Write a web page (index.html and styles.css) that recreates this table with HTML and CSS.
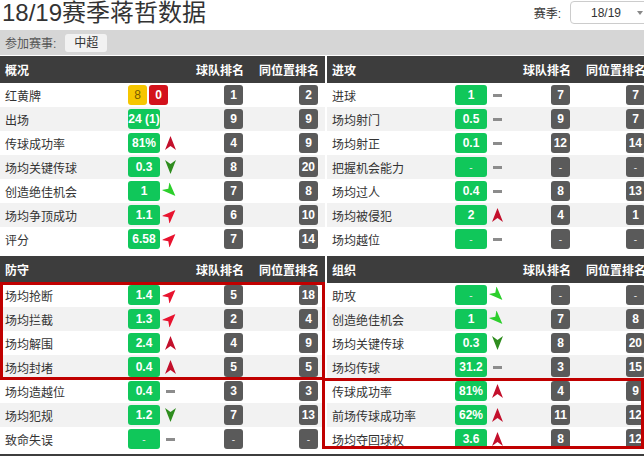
FILE: index.html
```html
<!DOCTYPE html>
<html lang="zh">
<head>
<meta charset="utf-8">
<title>18/19赛季蒋哲数据</title>
<link rel="stylesheet" href="styles.css">
</head>
<body>
<div class="page">
  <div class="top">
    <h1 class="title">18/19赛季蒋哲数据</h1>
    <div class="season">
      <span class="season-label">赛季:</span>
      <div class="select"><span>18/19</span><i class="caret"></i></div>
    </div>
  </div>
  <div class="filter">
    <span class="filter-label">参加赛事:</span>
    <span class="chip">中超</span>
  </div>

  <div class="sections">
    <div class="tbl">
      <div class="hd"><span class="hd-title">概况</span><span class="hd-col">球队排名</span><span class="hd-col">同位置排名</span></div>
      <div class="row"><span class="lbl">红黄牌</span><span class="cards"><b class="card yellow">8</b><b class="card red">0</b></span><span class="c-team"><b class="rk">1</b></span><span class="c-pos"><b class="rk">2</b></span></div>
      <div class="row"><span class="lbl">出场</span><span class="c-val"><b class="val">24 (1)</b></span><span class="c-ind"></span><span class="c-team"><b class="rk">9</b></span><span class="c-pos"><b class="rk">9</b></span></div>
      <div class="row"><span class="lbl">传球成功率</span><span class="c-val"><b class="val">81%</b></span><span class="c-ind"><i class="arr up"></i></span><span class="c-team"><b class="rk">4</b></span><span class="c-pos"><b class="rk">9</b></span></div>
      <div class="row"><span class="lbl">场均关键传球</span><span class="c-val"><b class="val">0.3</b></span><span class="c-ind"><i class="arr down"></i></span><span class="c-team"><b class="rk">8</b></span><span class="c-pos"><b class="rk">20</b></span></div>
      <div class="row"><span class="lbl">创造绝佳机会</span><span class="c-val"><b class="val">1</b></span><span class="c-ind"><i class="arr se"></i></span><span class="c-team"><b class="rk">7</b></span><span class="c-pos"><b class="rk">8</b></span></div>
      <div class="row"><span class="lbl">场均争顶成功</span><span class="c-val"><b class="val">1.1</b></span><span class="c-ind"><i class="arr ne"></i></span><span class="c-team"><b class="rk">6</b></span><span class="c-pos"><b class="rk">10</b></span></div>
      <div class="row"><span class="lbl">评分</span><span class="c-val"><b class="val">6.58</b></span><span class="c-ind"><i class="arr ne"></i></span><span class="c-team"><b class="rk">7</b></span><span class="c-pos"><b class="rk">14</b></span></div>
    </div>

    <div class="tbl">
      <div class="hd"><span class="hd-title">进攻</span><span class="hd-col">球队排名</span><span class="hd-col">同位置排名</span></div>
      <div class="row"><span class="lbl">进球</span><span class="c-val"><b class="val">1</b></span><span class="c-ind"><i class="dash"></i></span><span class="c-team"><b class="rk">7</b></span><span class="c-pos"><b class="rk">7</b></span></div>
      <div class="row"><span class="lbl">场均射门</span><span class="c-val"><b class="val">0.5</b></span><span class="c-ind"><i class="dash"></i></span><span class="c-team"><b class="rk">9</b></span><span class="c-pos"><b class="rk">7</b></span></div>
      <div class="row"><span class="lbl">场均射正</span><span class="c-val"><b class="val">0.1</b></span><span class="c-ind"><i class="dash"></i></span><span class="c-team"><b class="rk">12</b></span><span class="c-pos"><b class="rk">14</b></span></div>
      <div class="row"><span class="lbl">把握机会能力</span><span class="c-val"><b class="val empty">-</b></span><span class="c-ind"><i class="dash"></i></span><span class="c-team"><b class="rk empty">-</b></span><span class="c-pos"><b class="rk empty">-</b></span></div>
      <div class="row"><span class="lbl">场均过人</span><span class="c-val"><b class="val">0.4</b></span><span class="c-ind"><i class="dash"></i></span><span class="c-team"><b class="rk">8</b></span><span class="c-pos"><b class="rk">13</b></span></div>
      <div class="row"><span class="lbl">场均被侵犯</span><span class="c-val"><b class="val">2</b></span><span class="c-ind"><i class="arr up"></i></span><span class="c-team"><b class="rk">4</b></span><span class="c-pos"><b class="rk">1</b></span></div>
      <div class="row"><span class="lbl">场均越位</span><span class="c-val"><b class="val empty">-</b></span><span class="c-ind"><i class="dash"></i></span><span class="c-team"><b class="rk empty">-</b></span><span class="c-pos"><b class="rk empty">-</b></span></div>
    </div>

    <div class="tbl">
      <div class="hd"><span class="hd-title">防守</span><span class="hd-col">球队排名</span><span class="hd-col">同位置排名</span></div>
      <div class="row"><span class="lbl">场均抢断</span><span class="c-val"><b class="val">1.4</b></span><span class="c-ind"><i class="arr ne"></i></span><span class="c-team"><b class="rk">5</b></span><span class="c-pos"><b class="rk">18</b></span></div>
      <div class="row"><span class="lbl">场均拦截</span><span class="c-val"><b class="val">1.3</b></span><span class="c-ind"><i class="arr ne"></i></span><span class="c-team"><b class="rk">2</b></span><span class="c-pos"><b class="rk">4</b></span></div>
      <div class="row"><span class="lbl">场均解围</span><span class="c-val"><b class="val">2.4</b></span><span class="c-ind"><i class="arr up"></i></span><span class="c-team"><b class="rk">4</b></span><span class="c-pos"><b class="rk">9</b></span></div>
      <div class="row"><span class="lbl">场均封堵</span><span class="c-val"><b class="val">0.4</b></span><span class="c-ind"><i class="arr up"></i></span><span class="c-team"><b class="rk">5</b></span><span class="c-pos"><b class="rk">5</b></span></div>
      <div class="row"><span class="lbl">场均造越位</span><span class="c-val"><b class="val">0.4</b></span><span class="c-ind"><i class="dash"></i></span><span class="c-team"><b class="rk">3</b></span><span class="c-pos"><b class="rk">3</b></span></div>
      <div class="row"><span class="lbl">场均犯规</span><span class="c-val"><b class="val">1.2</b></span><span class="c-ind"><i class="arr down"></i></span><span class="c-team"><b class="rk">7</b></span><span class="c-pos"><b class="rk">13</b></span></div>
      <div class="row"><span class="lbl">致命失误</span><span class="c-val"><b class="val empty">-</b></span><span class="c-ind"><i class="dash"></i></span><span class="c-team"><b class="rk empty">-</b></span><span class="c-pos"><b class="rk empty">-</b></span></div>
    </div>

    <div class="tbl">
      <div class="hd"><span class="hd-title">组织</span><span class="hd-col">球队排名</span><span class="hd-col">同位置排名</span></div>
      <div class="row"><span class="lbl">助攻</span><span class="c-val"><b class="val empty">-</b></span><span class="c-ind"><i class="arr se"></i></span><span class="c-team"><b class="rk empty">-</b></span><span class="c-pos"><b class="rk empty">-</b></span></div>
      <div class="row"><span class="lbl">创造绝佳机会</span><span class="c-val"><b class="val">1</b></span><span class="c-ind"><i class="arr se"></i></span><span class="c-team"><b class="rk">7</b></span><span class="c-pos"><b class="rk">8</b></span></div>
      <div class="row"><span class="lbl">场均关键传球</span><span class="c-val"><b class="val">0.3</b></span><span class="c-ind"><i class="arr down"></i></span><span class="c-team"><b class="rk">8</b></span><span class="c-pos"><b class="rk">20</b></span></div>
      <div class="row"><span class="lbl">场均传球</span><span class="c-val"><b class="val">31.2</b></span><span class="c-ind"><i class="dash"></i></span><span class="c-team"><b class="rk">3</b></span><span class="c-pos"><b class="rk">15</b></span></div>
      <div class="row"><span class="lbl">传球成功率</span><span class="c-val"><b class="val">81%</b></span><span class="c-ind"><i class="arr up"></i></span><span class="c-team"><b class="rk">4</b></span><span class="c-pos"><b class="rk">9</b></span></div>
      <div class="row"><span class="lbl">前场传球成功率</span><span class="c-val"><b class="val">62%</b></span><span class="c-ind"><i class="arr up"></i></span><span class="c-team"><b class="rk">11</b></span><span class="c-pos"><b class="rk">12</b></span></div>
      <div class="row"><span class="lbl">场均夺回球权</span><span class="c-val"><b class="val">3.6</b></span><span class="c-ind"><i class="arr up"></i></span><span class="c-team"><b class="rk">8</b></span><span class="c-pos"><b class="rk">12</b></span></div>
    </div>

    <div class="mark mark-a"></div>
    <div class="mark mark-b"></div>
  </div>
  <div class="next-bar"></div>
</div>
</body>
</html>
```

FILE: styles.css
```css
html, body {
  margin: 0;
  padding: 0;
  background: #fff;
  overflow: hidden;
}
body {
  font-family: "Liberation Sans", "Noto Sans CJK SC", sans-serif;
  font-size: 12px;
  color: #333;
}
.page {
  width: 652px;
}
.top {
  height: 30px;
  display: flex;
  justify-content: space-between;
  align-items: flex-start;
}
.title {
  margin: 0 0 0 2px;
  font-size: 24px;
  font-weight: normal;
  line-height: 26px;
  color: #333;
}
.season {
  display: flex;
  align-items: center;
  height: 24px;
  margin-top: 0;
}
.season-label {
  font-size: 12px;
  color: #333;
  margin-right: 9px;
}
.select {
  position: relative;
  box-sizing: border-box;
  width: 82px;
  height: 23px;
  margin-top: 1px;
  border: 1px solid #ccc;
  border-radius: 4px;
  display: flex;
  align-items: center;
  justify-content: center;
  padding-right: 10px;
  font-size: 12px;
  color: #333;
}
.caret {
  position: absolute;
  right: 8px;
  top: 9px;
  width: 0;
  height: 0;
  border-left: 3px solid transparent;
  border-right: 3px solid transparent;
  border-top: 4px solid #888;
}
.filter {
  height: 25px;
  background: #d6d6d6;
  display: flex;
  align-items: center;
  padding-left: 5px;
  margin-bottom: 1px;
}
.filter-label {
  color: #555;
  font-size: 12px;
}
.chip {
  margin-left: 9px;
  height: 18px;
  line-height: 18px;
  padding: 0 9px;
  background: #f2f2f2;
  border-radius: 3px;
  color: #333;
  font-size: 12px;
}
.sections {
  position: relative;
  display: grid;
  grid-template-columns: 325px 325px;
  column-gap: 2px;
  row-gap: 5px;
}
.hd, .row {
  display: grid;
  grid-template-columns: 123px 32px 1fr 40px 75px;
  padding: 0 6px 0 5px;
  align-items: center;
}
.hd {
  height: 27px;
  background: #3d3d3d;
  color: #fff;
  font-weight: bold;
  font-size: 12px;
}
.hd-title {
  grid-column: 1 / 4;
}
.hd-col {
  justify-self: end;
  white-space: nowrap;
}
.row {
  height: 24px;
  background: #fff;
}
.row:nth-child(odd) {
  background: #f2f2f2;
}
.lbl {
  color: #333;
  white-space: nowrap;
  font-size: 12px;
}
.c-val {
  display: flex;
}
.c-ind {
  display: flex;
  align-items: center;
  padding-left: 5px;
}
.c-team, .c-pos {
  justify-self: end;
  display: flex;
  margin-right: 1px;
}
.cards {
  grid-column: 2 / 4;
  display: flex;
  gap: 2px;
}
.val, .rk, .card {
  box-sizing: border-box;
  height: 20px;
  border-radius: 3px;
  display: flex;
  align-items: center;
  justify-content: center;
  font-weight: bold;
  font-size: 12px;
  color: #fff;
  white-space: nowrap;
}
.val {
  width: 32px;
  background: #10c75a;
}
.rk {
  min-width: 19px;
  padding: 0 3px;
  background: #5a5a5a;
}
.empty {
  font-weight: normal;
  color: #e8e8e8;
  font-size: 10px;
}
.card {
  width: 19px;
}
.card.yellow {
  background: #f6c600;
  color: #7a5c00;
  font-weight: normal;
}
.card.red {
  background: #d3121c;
}
.arr {
  display: block;
  width: 11px;
  height: 14px;
  clip-path: polygon(50% 0, 100% 100%, 50% 72%, 0 100%);
}
.arr.up {
  background: #c3102c;
}
.arr.ne {
  background: #e8132f;
  transform: rotate(45deg);
}
.arr.se {
  background: #2ccf2c;
  transform: rotate(135deg);
}
.arr.down {
  background: #2f8d1f;
  transform: rotate(180deg);
}
.dash {
  display: block;
  width: 9px;
  height: 3px;
  background: #8c8c8c;
  margin-left: 1px;
}
.mark {
  position: absolute;
  box-sizing: border-box;
  border: 3px solid #c00000;
}
.mark-a {
  left: 0;
  top: 226px;
  width: 325px;
  height: 98px;
}
.mark-b {
  left: 322px;
  top: 322px;
  width: 322px;
  height: 71px;
}
.next-bar {
  margin-top: 3px;
  height: 20px;
  background: #3d3d3d;
}
```
